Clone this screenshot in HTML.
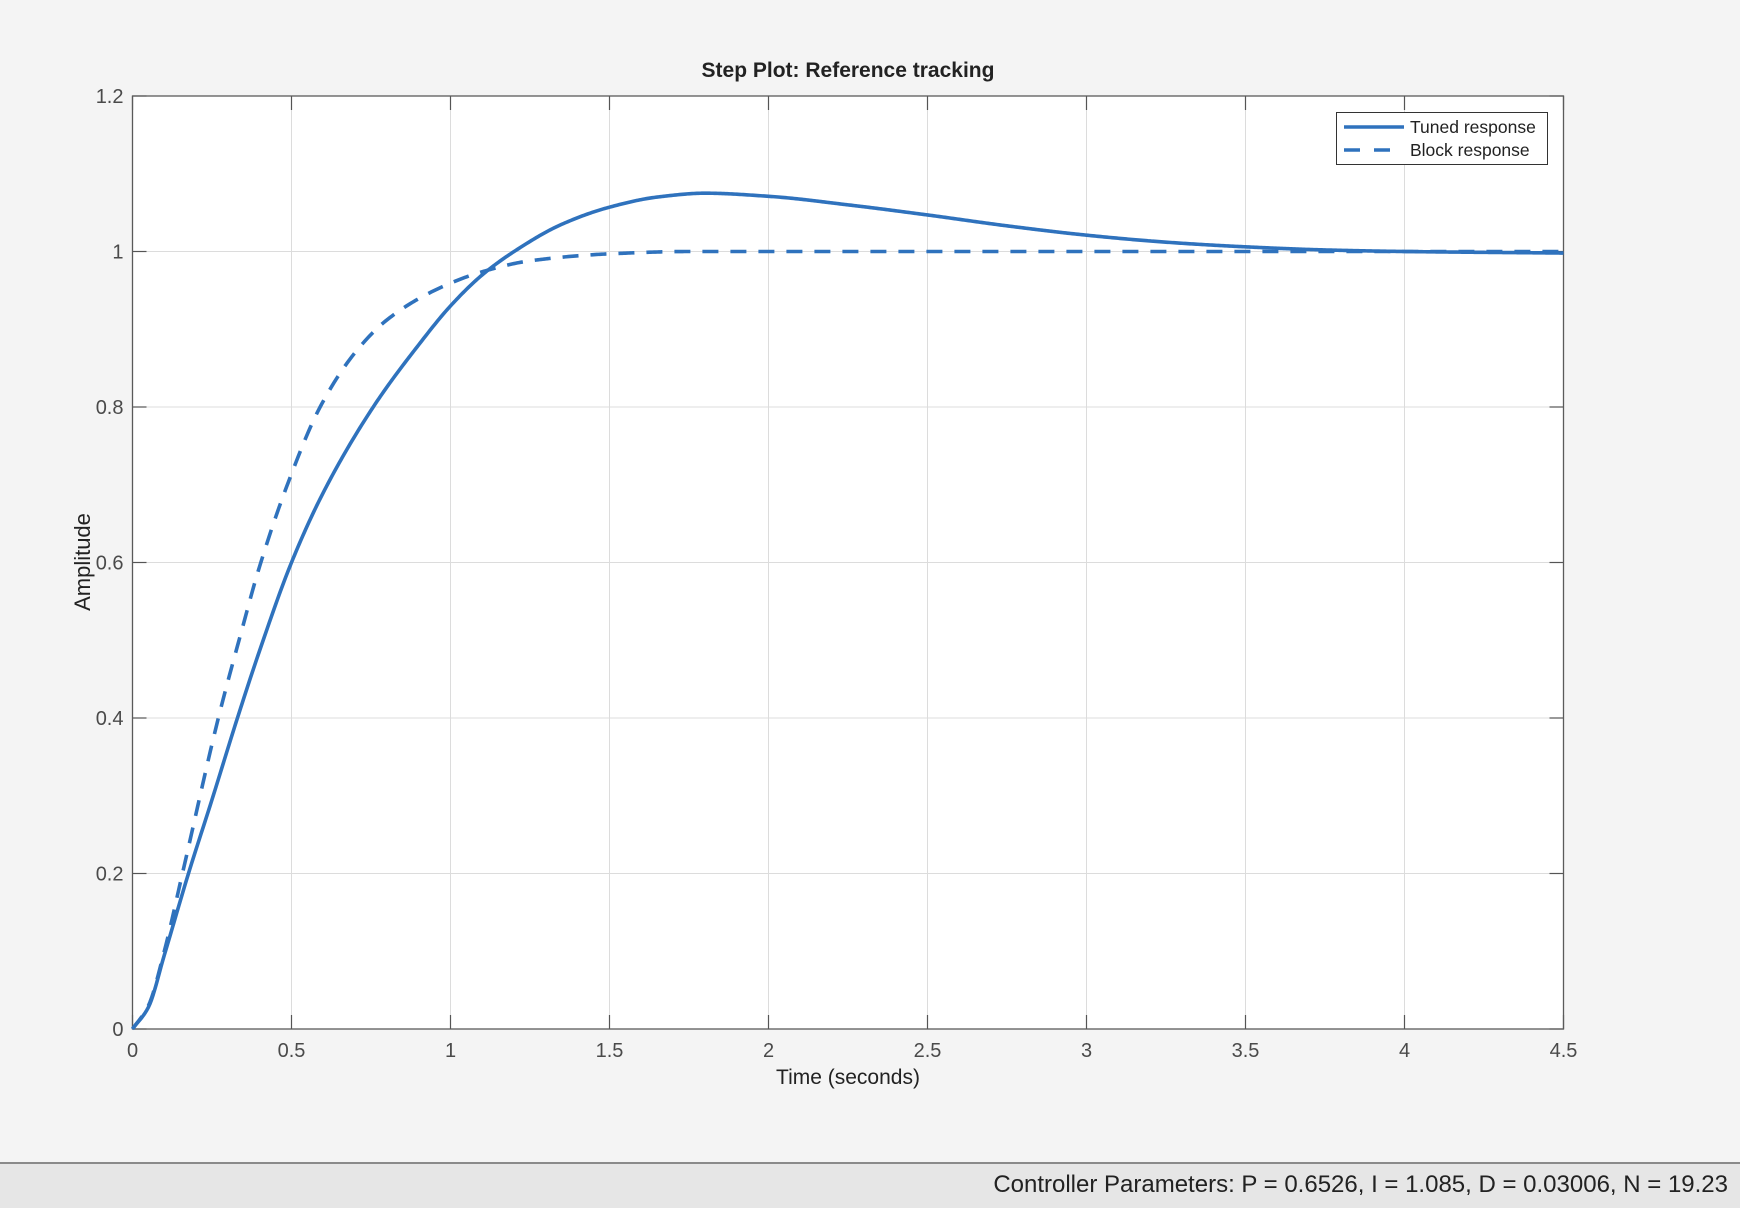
<!DOCTYPE html>
<html><head><meta charset="utf-8"><style>
html,body{margin:0;padding:0;width:1740px;height:1208px;overflow:hidden;background:#f4f4f4;font-family:"Liberation Sans",sans-serif;}
#status{position:absolute;left:0;top:1162px;width:1740px;height:46px;background:#e6e6e6;border-top:2px solid #8a8a8a;box-sizing:border-box;}
#status span{position:absolute;right:12px;top:7px;font-size:24px;color:#222;white-space:nowrap;}
</style></head><body>
<svg width="1740" height="1160" style="position:absolute;left:0;top:0" xmlns="http://www.w3.org/2000/svg" font-family="Liberation Sans, sans-serif">
<rect x="132.5" y="96" width="1431" height="933" fill="#fff"/>
<g id="grid" stroke="#dcdcdc" stroke-width="1"></g>
<g id="ticks" stroke="#555" stroke-width="1.2"></g>
<g id="labels" fill="#4a4a4a" font-size="20"></g>
<rect x="132.5" y="96" width="1431" height="933" fill="none" stroke="#5a5a5a" stroke-width="1.3"/>
<path id="tuned" fill="none" stroke="#2f72bd" stroke-width="3.6" stroke-linejoin="round"/>
<path id="block" fill="none" stroke="#2f72bd" stroke-width="3.6" stroke-dasharray="16,12"/>
<text x="848" y="77" text-anchor="middle" font-size="21" font-weight="bold" fill="#222">Step Plot: Reference tracking</text>
<text x="848" y="1084" text-anchor="middle" font-size="21" fill="#222">Time (seconds)</text>
<text transform="translate(90,562) rotate(-90)" text-anchor="middle" font-size="22" fill="#222">Amplitude</text>
<rect x="1336.5" y="112.5" width="211" height="52" fill="#fff" stroke="#333" stroke-width="1"/>
<line x1="1344" y1="127" x2="1404" y2="127" stroke="#2f72bd" stroke-width="3.6"/>
<line x1="1344" y1="150" x2="1404" y2="150" stroke="#2f72bd" stroke-width="3.6" stroke-dasharray="16,14"/>
<text x="1410" y="133" font-size="17.5" fill="#222">Tuned response</text>
<text x="1410" y="156" font-size="17.5" fill="#222">Block response</text>
</svg>
<div id="status"><span>Controller Parameters: P = 0.6526, I = 1.085, D = 0.03006, N = 19.23</span></div>
<script>
var L=132.5,T=96,W=1431,H=933;
function X(t){return L+t/4.5*W;}function Y(v){return T+H-(v/1.2)*H;}
var g=document.getElementById('grid'),tk=document.getElementById('ticks'),lb=document.getElementById('labels');
var NS='http://www.w3.org/2000/svg';
function el(p,n,a,txt){var e=document.createElementNS(NS,n);for(var k in a)e.setAttribute(k,a[k]);if(txt!=null)e.textContent=txt;p.appendChild(e);}
for(var i=0;i<=9;i++){var x=X(i*0.5);if(i>0&&i<9)el(g,'line',{x1:x,y1:T,x2:x,y2:T+H});
el(tk,'line',{x1:x,y1:T,x2:x,y2:T+14});el(tk,'line',{x1:x,y1:T+H,x2:x,y2:T+H-14});
el(lb,'text',{x:x,y:T+H+28,'text-anchor':'middle'},String(i*0.5));}
var yl=['0','0.2','0.4','0.6','0.8','1','1.2'];
for(var j=0;j<=6;j++){var y=Y(j*0.2);if(j>0&&j<6)el(g,'line',{x1:L,y1:y,x2:L+W,y2:y});
el(tk,'line',{x1:L,y1:y,x2:L+14,y2:y});el(tk,'line',{x1:L+W,y1:y,x2:L+W-14,y2:y});
el(lb,'text',{x:L-9,y:y+7,'text-anchor':'end'},yl[j]);}
function interp(pts){var n=pts.length,xs=pts.map(p=>p[0]),ys=pts.map(p=>p[1]),d=[],m=[];
for(var i=0;i<n-1;i++)d.push((ys[i+1]-ys[i])/(xs[i+1]-xs[i]));
m[0]=d[0];m[n-1]=d[n-2];
for(i=1;i<n-1;i++){if(d[i-1]*d[i]<=0)m[i]=0;else{var w1=2*(xs[i+1]-xs[i])+(xs[i]-xs[i-1]),w2=(xs[i+1]-xs[i])+2*(xs[i]-xs[i-1]);m[i]=(w1+w2)/(w1/d[i-1]+w2/d[i]);}}
var s='';for(var t=0;t<=4.5001;t+=0.005){var k=0;while(k<n-2&&t>xs[k+1])k++;
var h=xs[k+1]-xs[k],u=(t-xs[k])/h,h00=2*u*u*u-3*u*u+1,h10=u*u*u-2*u*u+u,h01=-2*u*u*u+3*u*u,h11=u*u*u-u*u;
var v=h00*ys[k]+h10*h*m[k]+h01*ys[k+1]+h11*h*m[k+1];s+=(s?'L':'M')+X(t).toFixed(2)+','+Y(v).toFixed(2);}return s;}
document.getElementById('tuned').setAttribute('d',interp([[0,0],[0.05,0.028],[0.1,0.095],[0.176,0.2],[0.25,0.295],[0.33,0.4],[0.4,0.487],[0.5,0.6],[0.6,0.69],[0.757,0.8],[0.9,0.88],[1.0,0.93],[1.1,0.97],[1.2,1.0],[1.35,1.035],[1.5,1.057],[1.65,1.07],[1.8,1.075],[2.0,1.071],[2.25,1.06],[2.5,1.047],[2.75,1.033],[3.0,1.021],[3.25,1.012],[3.5,1.006],[3.75,1.002],[4.0,1.0],[4.5,0.998]]));
document.getElementById('block').setAttribute('d',interp([[0,0],[0.05,0.03],[0.1,0.1],[0.157,0.2],[0.27,0.4],[0.345,0.515],[0.396,0.59],[0.487,0.7],[0.59,0.8],[0.7,0.87],[0.8,0.912],[0.95,0.95],[1.1,0.974],[1.25,0.988],[1.5,0.997],[1.75,1.0],[2.5,1.0],[4.5,1.0]]));
</script>
</body></html>
